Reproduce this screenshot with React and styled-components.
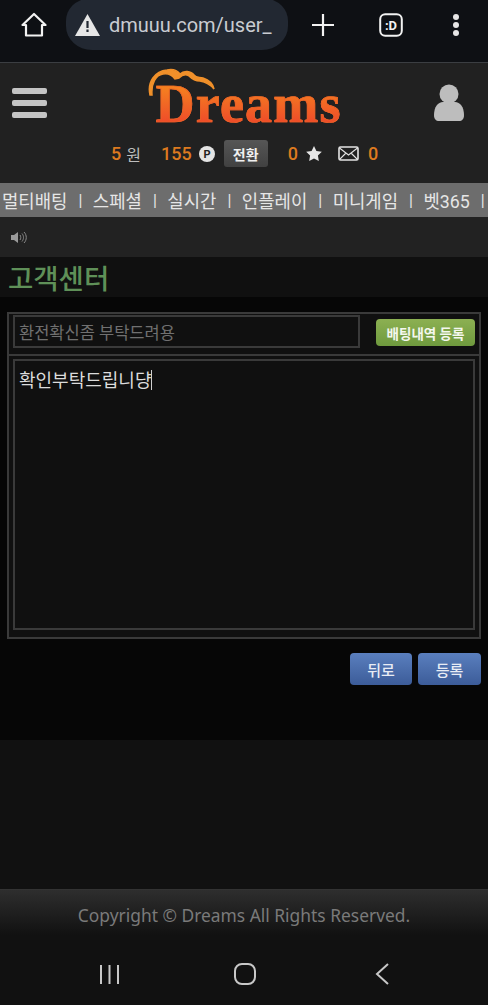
import styled, { createGlobalStyle } from 'styled-components'

const GlobalStyle = createGlobalStyle`
  html, body { margin: 0; padding: 0; background: #111; }
  body { font-family: "Roboto", "Noto Sans CJK KR", sans-serif; }
  * { box-sizing: border-box; }
`

const Page = styled.div`
  width: 488px;
  height: 1005px;
  display: flex;
  flex-direction: column;
  overflow: hidden;
  background: #111;
`

const BrowserBar = styled.div`
  height: 63px;
  flex: none;
  display: flex;
  align-items: flex-start;
  padding-left: 21px;
  background: #0e1014;
  border-bottom: 1px solid #3b3e42;
  color: #f2f2f2;
`

const HomeButton = styled.div`
  width: 26px;
  height: 26px;
  margin-top: 12px;
  flex: none;
`

const UrlPill = styled.div`
  width: 222px;
  height: 51px;
  margin-top: -1px;
  margin-left: 19px;
  padding-left: 9px;
  flex: none;
  display: flex;
  align-items: center;
  gap: 9px;
  background: #222832;
  border-radius: 22px 22px 26px 26px / 22px 22px 24px 24px;
  color: #c9ccd1;
  font-size: 20px;
  white-space: nowrap;
`

const BrowserActions = styled.div`
  position: relative;
  flex: 1;
`

const BrowserAction = styled.div`
  position: absolute;
  left: ${p => p.$x}px;
  top: ${p => p.$y}px;
  display: flex;
`

const HeaderBlock = styled.header`
  flex: none;
  background: #212121;
`

const LogoRow = styled.div`
  height: 67px;
  padding: 0 12px;
  display: flex;
  align-items: flex-start;
  justify-content: space-between;
`

const Burger = styled.div`
  width: 35px;
  margin-top: 25px;
  display: flex;
  flex-direction: column;
  gap: 6px;
  span {
    display: block;
    height: 6px;
    border-radius: 2px;
    background: #c4c4c4;
  }
`

const Logo = styled.div`
  position: relative;
  width: 195px;
  height: 67px;
  margin-left: 9px;
`

const Cloud = styled.svg`
  position: absolute;
  left: 0;
  top: 2px;
`

const LogoText = styled.div`
  position: absolute;
  left: 8px;
  top: 13px;
  font-family: "Liberation Serif", serif;
  font-weight: 700;
  font-size: 54px;
  line-height: 56px;
  letter-spacing: 1.2px;
  -webkit-text-stroke: 0.7px #ee6428;
  background: linear-gradient(180deg, #f5851f 15%, #ee4a2a 85%);
  -webkit-background-clip: text;
  background-clip: text;
  color: transparent;
`

const UserIcon = styled.svg`
  margin-top: 21px;
  margin-right: 12px;
`

const InfoRow = styled.div`
  height: 53px;
  display: flex;
  align-items: center;
  padding: 0 0 6px 111px;
  font-size: 16px;
  color: #bdbdbd;
`

const Amount = styled.span`
  color: #dd7a1f;
  font-size: 18px;
  font-weight: 500;
  margin-left: ${p => p.$gap || 0}px;
  margin-right: ${p => p.$after || 0}px;
`

const SwapButton = styled.div`
  width: 44px;
  height: 27px;
  margin-left: 9px;
  display: flex;
  align-items: center;
  justify-content: center;
  background: linear-gradient(180deg, #565656, #414141);
  border-radius: 3px;
  color: #f0f0f0;
  font-size: 14px;
  font-weight: 700;
`

const MenuBar = styled.nav`
  height: 34px;
  flex: none;
  display: flex;
  align-items: center;
  padding-left: 2px;
  background: #6d6d6d;
  color: #e6e6e6;
  font-size: 17.8px;
  white-space: nowrap;
  overflow: hidden;
  span { margin-right: 11px; }
  i { font-style: normal; font-size: 16px; margin-right: 10.5px; }
`

const NoticeRow = styled.div`
  height: 40px;
  flex: none;
  padding-left: 11px;
  display: flex;
  align-items: center;
  background: #222;
`

const TitleRow = styled.h1`
  height: 40px;
  margin: 0;
  flex: none;
  padding-left: 8px;
  display: flex;
  align-items: center;
  background: #101010;
  color: #5f9058;
  font-size: 27.5px;
  font-weight: 500;
`

const Content = styled.main`
  height: 443px;
  flex: none;
  padding: 15px 7px 0;
  background: #060606;
`

const FormPanel = styled.div`
  height: 327px;
  border: 2px solid #3a3a3a;
  background: #101010;
`

const SubjectRow = styled.div`
  height: 42px;
  padding: 1px 4px 0 4px;
  display: flex;
  align-items: flex-start;
  justify-content: space-between;
  border-bottom: 2px solid #3a3a3a;
`

const SubjectBox = styled.div`
  width: 347px;
  height: 33px;
  padding-left: 4px;
  display: flex;
  align-items: center;
  border: 2px solid #3a3a3a;
  color: #707070;
  font-size: 16.5px;
`

const GreenButton = styled.div`
  width: 99px;
  height: 27px;
  margin-top: 4px;
  display: flex;
  align-items: center;
  justify-content: center;
  border-radius: 4px;
  background: linear-gradient(180deg, #8cb052, #6f9a3e);
  color: #f4f7ee;
  font-size: 13.5px;
  font-weight: 700;
`

const MessageWrap = styled.div`
  padding: 3px 4px 0;
`

const MessageBox = styled.div`
  height: 271px;
  padding: 8px 4px;
  border: 2px solid #3a3a3a;
  color: #dcdcdc;
  font-size: 18px;
  line-height: 24px;
`

const Caret = styled.span`
  display: inline-block;
  width: 1px;
  height: 20px;
  vertical-align: -3px;
  background: #cfcfcf;
`

const ActionRow = styled.div`
  margin-top: 14px;
  display: flex;
  justify-content: flex-end;
  gap: 6px;
`

const BlueButton = styled.div`
  width: ${p => p.$w}px;
  height: 32px;
  display: flex;
  align-items: center;
  justify-content: center;
  border-radius: 4px;
  background: linear-gradient(180deg, #5a7fbe, #3c5c99);
  color: #e8ecf4;
  font-size: 15px;
  font-weight: 500;
`

const Spacer = styled.div`
  height: 149px;
  flex: none;
  background: #111;
`

const Footer = styled.footer`
  height: 46px;
  flex: none;
  display: flex;
  align-items: center;
  justify-content: center;
  padding-top: 5px;
  border-top: 1px solid #333;
  background: linear-gradient(180deg, #2e2e2e, #111);
  color: #7a7a7a;
  font-family: "Noto Sans", sans-serif;
  font-size: 17.4px;
`

const SystemNav = styled.div`
  flex: 1;
  position: relative;
  background: #111;
`

const NavIcon = styled.svg`
  position: absolute;
  left: ${p => p.$x}px;
  top: ${p => p.$y}px;
`

const menuItems = ['멀티배팅', '스페셜', '실시간', '인플레이', '미니게임', '벳365']

export default function App() {
  return (
    <Page>
      <GlobalStyle />
      <BrowserBar>
        <HomeButton>
          <svg width="26" height="26" viewBox="0 0 26 26" fill="none" stroke="#f2f2f2" strokeWidth="2.2" strokeLinejoin="round">
            <path d="M1.5 13 13 2l11.5 11H21v10.5H5V13z" />
          </svg>
        </HomeButton>
        <UrlPill>
          <svg width="25" height="22" viewBox="0 0 25 22">
            <path d="M12.5 0 25 22H0z" fill="#e6e6e6" />
            <path d="M11.4 7h2.2v7h-2.2zM11.4 15.6h2.2v2.4h-2.2z" fill="#222832" />
          </svg>
          <span>dmuuu.com/user_</span>
        </UrlPill>
        <BrowserActions>
          <BrowserAction $x={24} $y={14}>
            <svg width="22" height="22" viewBox="0 0 22 22" stroke="#f2f2f2" strokeWidth="2.2">
              <path d="M11 0v22M0 11h22" />
            </svg>
          </BrowserAction>
          <BrowserAction $x={91} $y={13}>
            <svg width="24" height="24" viewBox="0 0 24 24" fill="none">
              <rect x="1.2" y="1.2" width="21.6" height="21.6" rx="5" stroke="#f2f2f2" strokeWidth="2" />
              <text x="12" y="16.500" fontSize="13" fontWeight="700" textAnchor="middle" fill="#f2f2f2" fontFamily="Roboto, sans-serif">:D</text>
            </svg>
          </BrowserAction>
          <BrowserAction $x={164} $y={13}>
            <svg width="8" height="23" viewBox="0 0 8 23" fill="#e6e6e6">
              <circle cx="4" cy="4" r="3" />
              <circle cx="4" cy="12" r="3" />
              <circle cx="4" cy="20" r="3" />
            </svg>
          </BrowserAction>
        </BrowserActions>
      </BrowserBar>

      <HeaderBlock>
        <LogoRow>
          <Burger><span /><span /><span /></Burger>
          <Logo>
            <Cloud width="70" height="32" viewBox="0 0 70 32">
              <path
                d="M2 30C-1 17 7 6 19 5c5-1 10 0 13 4 4-4 11-3 14 1 2 3 5 2 9 3 6 2 10 6 11 11-4-5-8-7-14-8-5 0-8-2-11-5-3-2-7-1-10 2l-4 1c-3-4-7-6-12-5C8 10 3 18 4 30z"
                fill="#f0902a"
                stroke="#f0902a"
                strokeWidth="1.5"
              />
            </Cloud>
            <LogoText>Dreams</LogoText>
          </Logo>
          <UserIcon width="30" height="37" viewBox="0 0 30 37" fill="#bdbdbd">
            <circle cx="15" cy="10" r="9.5" />
            <path d="M0 31c0-8 4-13 9-13h12c5 0 9 5 9 13 0 4-2 6-5 6H5c-3 0-5-2-5-6z" />
          </UserIcon>
        </LogoRow>
        <InfoRow>
          <Amount $after={5}>5</Amount>원
          <Amount $gap={20} $after={7}>155</Amount>
          <svg width="16" height="16" viewBox="0 0 16 16">
            <circle cx="8" cy="8" r="8" fill="#e4e4e4" />
            <text x="8" y="12" fontSize="11" fontWeight="700" textAnchor="middle" fill="#222" fontFamily="Roboto, sans-serif">P</text>
          </svg>
          <SwapButton>전환</SwapButton>
          <Amount $gap={20} $after={8}>0</Amount>
          <svg width="16" height="15" viewBox="0 0 24 23" fill="#e6e6e6">
            <path d="M12 0l3.7 7.6 8.3 1.2-6 5.8 1.4 8.4L12 19l-7.4 4L6 14.6 0 8.8l8.3-1.2z" />
          </svg>
          <svg width="21" height="15" viewBox="0 0 21 15" fill="none" stroke="#e4e4e4" strokeWidth="1.6" style={{ marginLeft: 16 }}>
            <rect x="1" y="1" width="19" height="13" rx="1.5" />
            <path d="M1.5 2l9 7 9-7M1.5 13.5l6-6M19.5 13.5l-6-6" strokeWidth="1.1" />
          </svg>
          <Amount $gap={9}>0</Amount>
        </InfoRow>
      </HeaderBlock>

      <MenuBar>
        {menuItems.flatMap((item, i) => [
          <span key={item}>{item}</span>,
          <i key={i}>|</i>,
        ])}
      </MenuBar>

      <NoticeRow>
        <svg width="16" height="13" viewBox="0 0 16 13" fill="none">
          <path d="M0 4h3l4-3v11L3 9H0z" fill="#9a9a9a" />
          <path d="M9 4c1 1.500 1 3.500 0 5M11 2.500c2 2.500 2 5.500 0 8M13 1c3 3 3 8 0 11" stroke="#8a8a8a" strokeWidth="1" />
        </svg>
      </NoticeRow>

      <TitleRow>고객센터</TitleRow>

      <Content>
        <FormPanel>
          <SubjectRow>
            <SubjectBox>환전확신좀 부탁드려용</SubjectBox>
            <GreenButton>배팅내역 등록</GreenButton>
          </SubjectRow>
          <MessageWrap>
            <MessageBox>확인부탁드립니댱<Caret /></MessageBox>
          </MessageWrap>
        </FormPanel>
        <ActionRow>
          <BlueButton $w={62}>뒤로</BlueButton>
          <BlueButton $w={63}>등록</BlueButton>
        </ActionRow>
      </Content>

      <Spacer />

      <Footer>Copyright © Dreams All Rights Reserved.</Footer>

      <SystemNav>
        <NavIcon $x={99} $y={29} width="21" height="21" viewBox="0 0 21 21" stroke="#c8c8c8" strokeWidth="2">
          <path d="M2 1v19M10.500 1v19M19 1v19" />
        </NavIcon>
        <NavIcon $x={234} $y={28} width="22" height="22" viewBox="0 0 22 22" fill="none" stroke="#c8c8c8" strokeWidth="2">
          <rect x="1" y="1" width="20" height="20" rx="7" />
        </NavIcon>
        <NavIcon $x={375} $y={28} width="14" height="22" viewBox="0 0 14 22" fill="none" stroke="#c8c8c8" strokeWidth="2">
          <path d="M13 1 2 11l11 10" />
        </NavIcon>
      </SystemNav>
    </Page>
  )
}
